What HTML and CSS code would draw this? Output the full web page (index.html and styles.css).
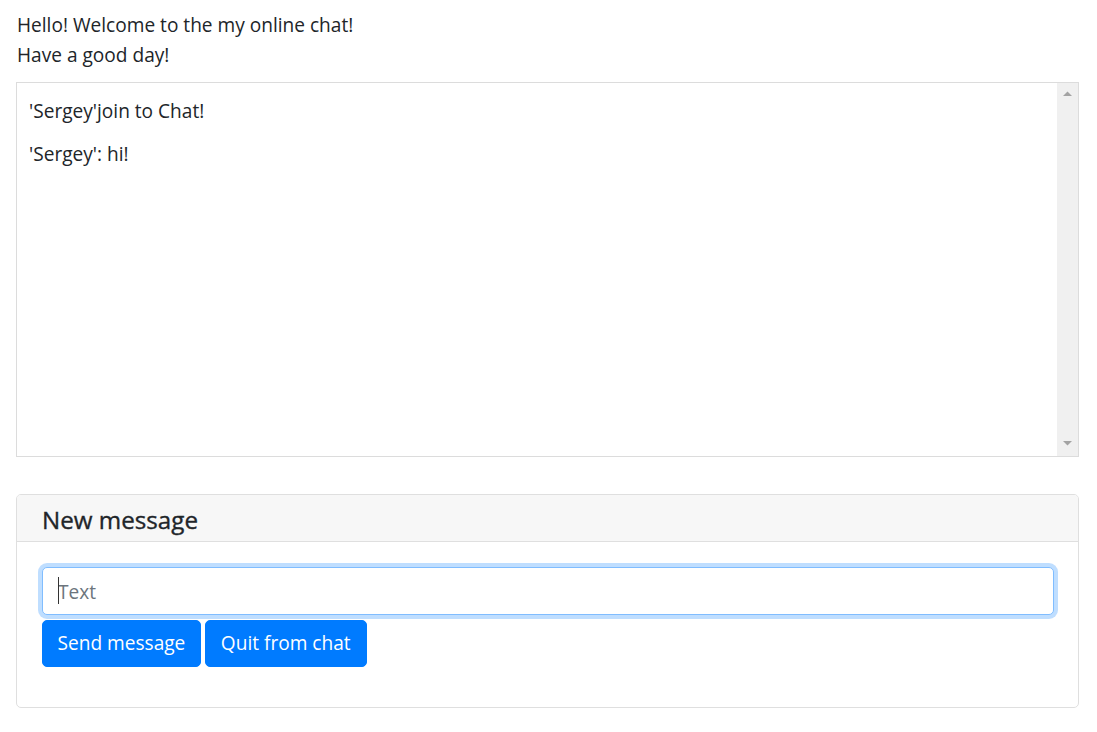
FILE: index.html
```html
<!DOCTYPE html>
<html lang="en">
<head>
<meta charset="utf-8">
<title>Chat</title>
<link rel="stylesheet" href="styles.css">
</head>
<body>
<div class="page">
  <div class="greeting">
    <div>Hello! Welcome to the my online chat!</div>
    <div>Have a good day!</div>
  </div>
  <div class="chat">
    <div class="messages">
      <p class="msg">'Sergey'join to Chat!</p>
      <p class="msg">'Sergey': hi!</p>
    </div>
    <div class="scrollbar">
      <svg class="arrow" width="21" height="8" viewBox="0 0 21 8"><path d="M6 6 L15 6 L10.5 1.5 Z" fill="#a3a3a3"/></svg>
      <svg class="arrow" width="21" height="8" viewBox="0 0 21 8"><path d="M6 2 L15 2 L10.5 6.5 Z" fill="#a3a3a3"/></svg>
    </div>
  </div>
  <div class="card">
    <div class="card-header"><h5 class="card-title">New message</h5></div>
    <div class="card-body">
      <div class="field">
        <input class="text-input" type="text" placeholder="Text">
        <span class="caret"></span>
      </div>
      <div class="actions">
        <button class="btn">Send message</button>
        <button class="btn">Quit from chat</button>
      </div>
    </div>
  </div>
</div>
</body>
</html>
```
FILE: styles.css
```css
* { box-sizing: border-box; }
html, body { margin: 0; padding: 0; background: #fff; }
body {
  font-family: "Open Sans", "Noto Sans", sans-serif;
  font-size: 19.1px;
  color: #212529;
}
.page {
  padding: 10px 18px 0 16px;
}
.greeting {
  line-height: 30px;
  padding-left: 1px;
  margin-bottom: 12px;
}
.chat {
  display: flex;
  height: 375px;
  border: 1px solid #dcdcdc;
  margin-bottom: 37px;
}
.messages {
  flex: 1;
  padding: 17px 12px 15px 12px;
}
.msg {
  margin: 0 0 20px 0;
  line-height: 23px;
}
.scrollbar {
  width: 21px;
  background: #f0f0f0;
  display: flex;
  flex-direction: column;
  justify-content: space-between;
  padding: 7px 0 9px 0;
}
.arrow { display: block; }
.card {
  border: 1px solid #dfdfdf;
  border-radius: 5px;
  overflow: hidden;
}
.card-header {
  background: #f7f7f7;
  border-bottom: 1px solid #dfdfdf;
  height: 47px;
  padding: 0 25px;
  display: flex;
  align-items: center;
}
.card-title {
  margin: 0;
  font-size: 24.2px;
  font-weight: 500;
  line-height: 28px;
  padding-top: 3px;
  -webkit-text-stroke: 0.35px #212529;
}
.card-body {
  padding: 25px 24px 40px 25px;
}
.field {
  position: relative;
}
.text-input {
  display: block;
  width: 100%;
  height: 48px;
  border: 1px solid #80bdff;
  border-radius: 5px;
  box-shadow: 0 0 0 4px rgba(0, 123, 255, 0.25);
  padding: 1px 15px 0 15px;
  font-family: inherit;
  font-size: 19.1px;
  color: #495057;
  outline: none;
  background: #fff;
}
.text-input::placeholder { color: #6c757d; }
.caret {
  position: absolute;
  left: 16px;
  top: 10px;
  width: 1px;
  height: 27px;
  background: #333;
}
.actions {
  display: flex;
  gap: 4px;
  margin-top: 5px;
}
.btn {
  height: 47px;
  padding: 0 15px 0 14.5px;
  border: 1px solid #007bff;
  border-radius: 5px;
  background: #007bff;
  color: #fff;
  font-family: inherit;
  font-size: 19.1px;
  line-height: 1;
  cursor: pointer;
}
```
